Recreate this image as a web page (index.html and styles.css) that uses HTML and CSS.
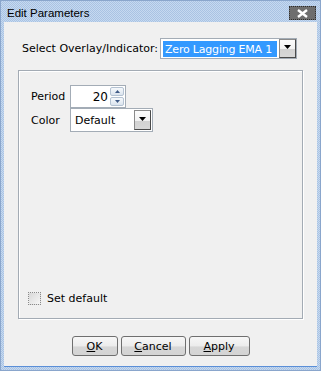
FILE: index.html
```html
<!DOCTYPE html>
<html lang="en">
  <head>
    <meta charset="UTF-8" />
    <title>Edit Parameters</title>
    <link rel="stylesheet" href="styles.css">
  </head>
  <body>
    <div class="window">
      <div class="titlebar">
        <span class="title">Edit Parameters</span>
        <span class="close">
          <svg width="13" height="9" viewBox="0 0 13 9">
            <path d="M2 1 L11 8 M11 1 L2 8" stroke="#fff" stroke-width="2.4" fill="none" />
          </svg>
        </span>
      </div>

      <div class="content">
        <div class="overlay-row">
          <label>Select Overlay/Indicator:</label>
          <div class="combo overlay">
            <span class="combo-value selected">Zero Lagging EMA 1</span>
            <span class="drop">
              <svg width="7" height="4" viewBox="0 0 7 4"><path d="M0 0 H7 L3.5 4 Z" fill="#000" /></svg>
            </span>
          </div>
        </div>

        <div class="panel">
          <div class="fields">
            <label>Period</label>
            <div class="spinner">
              <span class="spin-value">20</span>
              <span class="spin-buttons">
                <span class="spin-btn">
                  <svg width="5" height="3" viewBox="0 0 5 3"><path d="M0 3 H5 L2.5 0 Z" fill="#3f5a86" /></svg>
                </span>
                <span class="spin-btn">
                  <svg width="5" height="3" viewBox="0 0 5 3"><path d="M0 0 H5 L2.5 3 Z" fill="#3f5a86" /></svg>
                </span>
              </span>
            </div>

            <label>Color</label>
            <div class="combo color">
              <span class="combo-value">Default</span>
              <span class="drop">
                <svg width="7" height="4" viewBox="0 0 7 4"><path d="M0 0 H7 L3.5 4 Z" fill="#000" /></svg>
              </span>
            </div>
          </div>

          <label class="check"><span class="box"></span>Set default</label>
        </div>

        <div class="buttons">
          <button class="btn ok"><u>O</u>K</button>
          <button class="btn cancel"><u>C</u>ancel</button>
          <button class="btn apply"><u>A</u>pply</button>
        </div>
      </div>
    </div>
  </body>
</html>
```

FILE: styles.css
```css
body {
  margin: 0;
  font-family: "DejaVu Sans", sans-serif;
  font-size: 11px;
  color: #000;
}

.window {
  width: 321px;
  height: 371px;
  box-sizing: border-box;
  border: 1px solid #8aa6cc;
  padding: 0 3px 3px;
  display: flex;
  flex-direction: column;
  background: repeating-conic-gradient(#c6d9f0 0 25%, #a9c3e3 0 50%) 0 0 / 2px 2px;
}

.titlebar {
  height: 21px;
  display: flex;
  align-items: center;
  justify-content: space-between;
  padding-left: 3px;
}

.title {
  font-family: "Liberation Sans", sans-serif;
  font-size: 11.5px;
  padding-top: 3px;
}

.close {
  width: 27px;
  height: 14px;
  box-sizing: border-box;
  margin-right: 1px;
  margin-top: 3px;
  border: 1px dotted #2e2e2e;
  background: #6e6e6e;
  display: flex;
  align-items: center;
  justify-content: center;
}

.content {
  flex: 1;
  background: #f0f0f0;
  border-bottom: 1px solid #5a8fd8;
  display: flex;
  flex-direction: column;
}

.overlay-row {
  display: flex;
  align-items: center;
  gap: 2px;
  margin: 16px 0 0 18px;
}

.combo {
  box-sizing: border-box;
  border: 1px solid #a3acb6;
  background: #fff;
  display: flex;
  align-items: stretch;
}

.combo.overlay {
  width: 137px;
  height: 21px;
  flex-shrink: 0;
  padding: 2px 0 1px 2px;
  gap: 2px;
}

.combo.color {
  width: 83px;
  height: 24px;
  padding: 1px;
}

.combo-value {
  flex: 1;
  display: flex;
  align-items: center;
  padding-left: 3px;
  white-space: nowrap;
  overflow: hidden;
}

.combo-value.selected {
  background: #3399ff;
  color: #fff;
  padding-left: 2px;
  letter-spacing: -0.2px;
}

.drop {
  width: 17px;
  flex-shrink: 0;
  box-sizing: border-box;
  border: 1px solid #4a4a4a;
  border-top-color: #8a8a8a;
  border-left-color: #8a8a8a;
  background: linear-gradient(#fbfbfb 0, #f2f2f2 55%, #d2d2d2 55%, #d8d8d8 100%);
  display: flex;
  align-items: center;
  justify-content: center;
  padding-bottom: 3px;
}

.combo.overlay .drop {
  margin: -2px 0 -1px;
}

.panel {
  height: 249px;
  box-sizing: border-box;
  margin: 11px 14px 0;
  border: 1px solid #a3abb4;
  box-shadow: inset 1px 1px 0 #fff, 1px 1px 0 #fff;
  padding: 14px 12px 13px;
  display: flex;
  flex-direction: column;
}

.fields {
  display: grid;
  grid-template-columns: 39px auto;
  align-items: center;
  justify-items: start;
}

.spinner {
  width: 56px;
  height: 23px;
  box-sizing: border-box;
  border: 1px solid #a3acb6;
  background: #fff;
  display: flex;
}

.spin-value {
  flex: 1;
  display: flex;
  align-items: center;
  justify-content: flex-end;
  padding-right: 2px;
  font-size: 12px;
}

.spin-buttons {
  width: 14px;
  display: flex;
  flex-direction: column;
  gap: 1px;
  padding: 1px 1px 1px 0;
}

.spin-btn {
  flex: 1;
  border: 1px solid #b4c2d2;
  border-radius: 2px;
  background: linear-gradient(#f6f9fc, #dbe4ee);
  display: flex;
  align-items: center;
  justify-content: center;
}

.check {
  margin-top: auto;
  margin-left: -3px;
  display: flex;
  align-items: center;
  gap: 6px;
}

.box {
  width: 13px;
  height: 13px;
  box-sizing: border-box;
  border: 1px dotted #8a8a8a;
  background: linear-gradient(135deg, #d8d8d8, #f6f6f6);
}

.buttons {
  display: flex;
  justify-content: center;
  gap: 3px;
  margin-top: 17px;
}

.btn {
  height: 20px;
  box-sizing: border-box;
  border: 1px solid #6f6f6f;
  border-radius: 3px;
  background: linear-gradient(#f7f7f7 0, #ececec 50%, #d6d6d6 55%, #d4d4d4 100%);
  font-family: "DejaVu Sans", sans-serif;
  font-size: 11px;
  color: #000;
  padding: 0;
}

.btn.ok {
  width: 46px;
}

.btn.cancel {
  width: 65px;
}

.btn.apply {
  width: 61px;
}
```
